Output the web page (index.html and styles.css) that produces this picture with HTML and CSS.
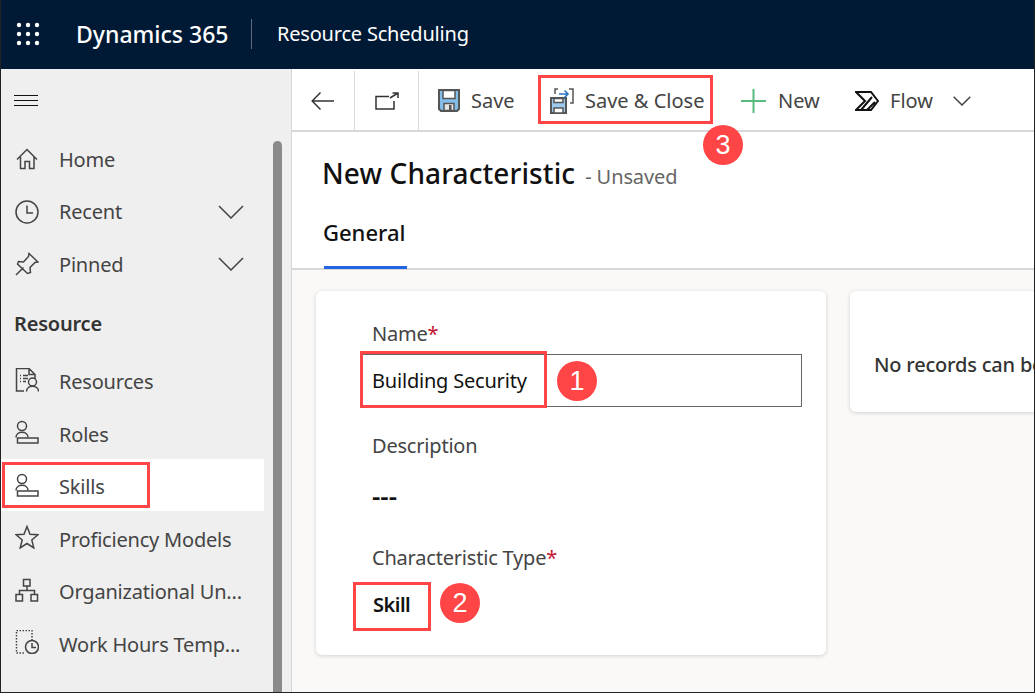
FILE: index.html
```html
<!DOCTYPE html>
<html lang="en">
<head>
  <meta charset="UTF-8">
  <title>New Characteristic - Dynamics 365</title>
  <link rel="stylesheet" href="styles.css">
</head>
<body>
  <div class="frame">
    <header class="topbar">
      <svg class="waffle" width="24" height="24" viewBox="0 0 24 24" fill="#fff">
        <circle cx="3" cy="3" r="2.2"/><circle cx="12" cy="3" r="2.2"/><circle cx="21" cy="3" r="2.2"/>
        <circle cx="3" cy="12" r="2.2"/><circle cx="12" cy="12" r="2.2"/><circle cx="21" cy="12" r="2.2"/>
        <circle cx="3" cy="21" r="2.2"/><circle cx="12" cy="21" r="2.2"/><circle cx="21" cy="21" r="2.2"/>
      </svg>
      <span class="brand">Dynamics 365</span>
      <span class="app-name">Resource Scheduling</span>
    </header>

    <div class="layout">
      <nav class="sidenav">
        <div class="burger"><span></span><span></span><span></span></div>
        <ul class="navlist">
          <li class="navitem">
            <svg class="ico" width="24" height="24" viewBox="0 0 24 24"><path d="M2 12.500 12 2.500l10 10M5.500 10v11.500h4.500v-7h4.500v7h4.500V10"/></svg>
            <span>Home</span>
          </li>
          <li class="navitem">
            <svg class="ico" width="24" height="24" viewBox="0 0 24 24"><circle cx="12" cy="12" r="11"/><path d="M12 5.500V13h6"/></svg>
            <span>Recent</span>
            <svg class="ico chev" width="26" height="14" viewBox="0 0 26 14"><path d="m1 1 12 12L25 1"/></svg>
          </li>
          <li class="navitem">
            <svg class="ico" width="24" height="24" viewBox="0 0 24 24"><path d="m1 23 7.500-7.500M14 1.500l9 8.500-3 .5-5 5 .5 5-3 1L2.500 12l1-2.500 5 .5 5-5.500z"/></svg>
            <span>Pinned</span>
            <svg class="ico chev" width="26" height="14" viewBox="0 0 26 14"><path d="m1 1 12 12L25 1"/></svg>
          </li>
        </ul>
        <h2 class="navhead">Resource</h2>
        <ul class="navlist navlist-res">
          <li class="navitem">
            <svg class="ico" width="24" height="24" viewBox="0 0 24 24"><path d="M9 23H1.500V.5H14l6 6V11M14 .5V6.500h6M5 7.500h1M8 7.500h5M5 10.500h1M8 10.500h5M5 13.500h1M8 13.500h3"/><circle cx="17.500" cy="14" r="4"/><path d="M11.500 23.500c0-7 12-7 12 0"/></svg>
            <span>Resources</span>
          </li>
          <li class="navitem">
            <svg class="ico" width="24" height="24" viewBox="0 0 24 24"><circle cx="7" cy="6" r="4.500"/><path d="M1 17.500c0-7 12-7 12 0"/><rect x="2.500" y="18" width="20.500" height="5"/></svg>
            <span>Roles</span>
          </li>
          <li class="navitem is-active">
            <svg class="ico" width="24" height="24" viewBox="0 0 24 24"><circle cx="7" cy="6" r="4.500"/><path d="M1 17.500c0-7 12-7 12 0"/><rect x="2.500" y="18" width="20.500" height="5"/></svg>
            <span>Skills</span>
          </li>
          <li class="navitem">
            <svg class="ico" width="24" height="24" viewBox="0 0 24 24"><path d="m12 1.500 3 7.700 8 .5-6.200 5.200 2 8L12 18.500 5.200 22.900l2-8L1 9.700l8-.5z"/></svg>
            <span>Proficiency Models</span>
          </li>
          <li class="navitem">
            <svg class="ico" width="24" height="24" viewBox="0 0 24 24"><path d="M8.500 1.500h6.500v6.500H8.500zM1 16.500h6.500V23H1zM16 16.500h6.500V23H16zM12 8v4.500M4.500 16.500v-4h15v4"/></svg>
            <span>Organizational Un...</span>
          </li>
          <li class="navitem">
            <svg class="ico" width="24" height="24" viewBox="0 0 24 24"><path class="dotted" d="M9 23H1.500V.5h15.500V10"/><circle cx="17" cy="17" r="6.500"/><path d="M17 13v4.500h4"/></svg>
            <span>Work Hours Temp...</span>
          </li>
        </ul>
        <div class="scrollthumb"></div>
      </nav>

      <main class="content">
        <div class="toolbar">
          <button class="tool tool-icon">
            <svg class="ico" width="24" height="20" viewBox="0 0 24 20"><path d="M23 10H1.500M9.500 1.500 1.200 10l8.300 8.500"/></svg>
          </button>
          <button class="tool tool-icon">
            <svg class="ico" width="24" height="18" viewBox="0 0 24 18"><path d="M14 4.500H1v12.500h18v-8M15 6l8-5M17.500 1H23v5"/></svg>
          </button>
          <button class="tool tool-save">
            <svg width="22" height="23" viewBox="0 0 22 23"><path d="M1 1h20v19l-2 2H3l-2-2z" fill="#83bdea" stroke="#555" stroke-width="2"/><path d="M5 1.500h12v8H5z" fill="#fff" stroke="#555" stroke-width="1.500"/><path d="M6 21.500v-7h10v7z" fill="#e6e6e6" stroke="#555" stroke-width="1.500"/><path d="M11 16h2.500v5H11z" fill="#555"/></svg>
            <span>Save</span>
          </button>
          <button class="tool tool-close">
            <svg width="24" height="26" viewBox="0 0 24 26"><path d="M1 10h15v15H1z" fill="#9cc9ec" stroke="#555" stroke-width="2"/><path d="M4 10.500h9v4H4zM4 25v-5h9v5z" fill="#fff" stroke="#555" stroke-width="1.500"/><path d="M5 6V1h3M19 1h4v14h-3" fill="none" stroke="#555" stroke-width="1.500"/><path d="M9 6h9M14.500 2.500 18 6l-3.500 3.500" fill="none" stroke="#2b74c4" stroke-width="1.600"/></svg>
            <span>Save &amp; Close</span>
          </button>
          <button class="tool tool-new">
            <svg width="25" height="24" viewBox="0 0 25 24"><path d="M12.500 0v24M0 12h25" fill="none" stroke="#58ba7c" stroke-width="2"/></svg>
            <span>New</span>
          </button>
          <button class="tool tool-flow">
            <svg width="24" height="20" viewBox="0 0 24 20" fill="none" stroke="#111" stroke-width="2"><path d="M1 1h15l7 9-7 9H1l9-9zM1 1l9 9M6 19 17 6M12 19l8-8"/></svg>
            <span>Flow</span>
            <svg class="ico flow-chev" width="18" height="10" viewBox="0 0 18 10"><path d="m.7.7 8.300 8.300L17.300.7"/></svg>
          </button>
        </div>

        <div class="titlebar">
          <h1 class="title">New Characteristic</h1>
          <span class="unsaved">- Unsaved</span>
        </div>
        <div class="tabs">
          <span class="tab">General</span>
        </div>

        <div class="formarea">
          <section class="card card-main">
            <div class="field field-name">
              <label class="field-label">Name<i>*</i></label>
              <div class="textbox">Building Security</div>
            </div>
            <div class="field field-desc">
              <label class="field-label">Description</label>
              <div class="field-value field-dash">---</div>
            </div>
            <div class="field">
              <label class="field-label">Characteristic Type<i>*</i></label>
              <div class="field-value field-strong">Skill</div>
            </div>
          </section>
          <section class="card card-side">
            <p>No records can be displayed</p>
          </section>
        </div>
      </main>
    </div>

    <div class="mark box-skills"></div>
    <div class="mark box-close"></div>
    <div class="mark box-name"></div>
    <div class="mark box-type"></div>
    <div class="step step-1">1</div>
    <div class="step step-2">2</div>
    <div class="step step-3">3</div>
  </div>
</body>
</html>
```

FILE: styles.css
```css
* { margin: 0; padding: 0; box-sizing: border-box; }
html, body { width: 1035px; height: 693px; overflow: hidden; }
body { font-family: "Noto Sans", "Open Sans", sans-serif; font-size: 20px; color: #444; background: #fff; }

.frame { position: relative; width: 1035px; height: 693px; border: solid #222; border-width: 0 1px 1px 1px; overflow: hidden; }

.topbar { display: flex; align-items: center; height: 69px; padding-bottom: 1px; background: #001a36; color: #fff; }
.waffle { margin-left: 15px; }
.brand { margin-left: 36px; width: 175px; font-size: 23px; font-weight: 500; }
.app-name { padding-left: 25px; line-height: 30px; border-left: 1px solid #5b6b7c; font-size: 20px; letter-spacing: -0.2px; }

.layout { display: flex; height: 623px; }

.sidenav { position: relative; width: 291px; flex: none; background: #efefef; border-right: 1px solid #d6d6d6; }
.burger { display: flex; flex-direction: column; gap: 4px; padding: 26px 0 0 13px; height: 64px; }
.burger span { display: block; width: 24px; height: 1px; background: #111; }
.navlist { list-style: none; }
.navitem { display: flex; align-items: center; height: 52.500px; padding-left: 14px; width: 263px; }
.navitem > span { margin-left: 20px; letter-spacing: -0.2px; white-space: nowrap; }
.navlist-res .navitem > span { padding-top: 4px; }
.navitem .chev { margin-left: auto; margin-right: 20px; }
.navitem.is-active { background: #fff; box-shadow: -1px 0 0 #1c4fa8; }
.navhead { height: 63px; padding: 19px 0 0 13px; font-size: 20px; font-weight: 600; line-height: 28px; letter-spacing: -0.2px; color: #333; }
.scrollthumb { position: absolute; right: 9px; top: 72px; bottom: 0; width: 9px; background: #8a8a8a; border-radius: 5px 5px 0 0; }

.ico { flex: none; fill: none; stroke: #444; stroke-width: 1.500; }
.dotted { stroke-dasharray: 1.500 1.500; }

.content { flex: 1; min-width: 0; display: flex; flex-direction: column; }

.toolbar { display: flex; align-items: center; height: 63px; flex: none; padding-top: 2px; border-bottom: 2px solid #d8d8d8; }
.tool { display: flex; align-items: center; height: 100%; border: 0; background: none; font: inherit; font-size: 20px; color: #444; }
.tool-icon { justify-content: center; width: 63px; border-right: 1px solid #d8d8d8; }
.tool-icon .ico { stroke: #333; }
.tool-icon:nth-child(2) { width: 64px; }
.tool-save { gap: 11px; padding-left: 19px; width: 120px; }
.tool-close { gap: 11px; padding-left: 11px; width: 202px; }
.tool-new { gap: 12px; width: 114px; }
.tool-flow { gap: 11px; }
.flow-chev { margin-left: 9px; }

.titlebar { display: flex; align-items: baseline; height: 73px; flex: none; padding: 21px 0 0 30px; }
.title { font-size: 28px; font-weight: 500; line-height: 40px; letter-spacing: 0.1px; color: #111; }
.unsaved { margin-left: 10px; letter-spacing: -0.1px; color: #666; }

.tabs { height: 65px; flex: none; padding-left: 32px; border-bottom: 2px solid #d8d8d8; }
.tab { display: block; width: 83px; height: 64px; padding-top: 13px; border-bottom: 3px solid #2266e3; font-weight: 500; font-size: 22px; line-height: 28px; text-indent: -1px; color: #111; }

.formarea { flex: 1; display: flex; align-items: flex-start; gap: 24px; padding: 21px 0 0 24px; background: #faf9f8; overflow: hidden; }
.card { flex: none; background: #fff; border-radius: 6px; box-shadow: 0 1px 4px rgba(0, 0, 0, 0.16); }
.card-main { width: 510px; height: 364px; padding: 28px 24px 0 56px; }
.card-side { width: 300px; height: 121px; padding: 59px 0 0 24px; white-space: nowrap; font-weight: 500; letter-spacing: -0.2px; color: #333; }
.card-side p { line-height: 30px; }

.field-label { display: block; line-height: 30px; letter-spacing: -0.2px; color: #444; }
.field-label i { font-style: normal; color: #c4122f; }
.textbox { height: 53px; margin: 5px 0 0 -11px; padding-left: 10px; border: 1px solid #666; line-height: 52px; letter-spacing: -0.2px; color: #111; }
.field-name { height: 112px; }
.field-desc { height: 112px; }
.field-value { margin-top: 16px; line-height: 30px; font-weight: 500; color: #111; }
.field-dash { margin-top: 19px; font-size: 26px; font-weight: 600; }
.field-strong { margin-top: 17px; padding-left: 1px; font-weight: 600; letter-spacing: -0.5px; }

.mark { position: absolute; border: 3px solid #ff4545; }
.box-skills { left: 1px; top: 462px; width: 148px; height: 46px; }
.box-close { left: 537px; top: 75px; width: 175px; height: 49px; }
.box-name { left: 359px; top: 351px; width: 187px; height: 57px; }
.box-type { left: 352px; top: 582px; width: 78px; height: 49px; }

.step { position: absolute; display: flex; align-items: center; justify-content: center; width: 40px; height: 40px; border-radius: 50%; background: #ff4545; color: #fff; font-family: "Liberation Sans", sans-serif; font-size: 27px; }
.step-1 { left: 556px; top: 361px; }
.step-2 { left: 439px; top: 583px; }
.step-3 { left: 702px; top: 125px; }
```
